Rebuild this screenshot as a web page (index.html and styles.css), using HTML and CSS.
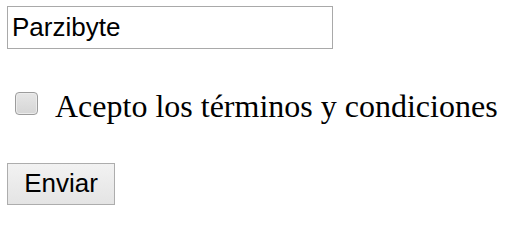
FILE: index.html
```html
<!DOCTYPE html>
<html lang="es">
<head>
<meta charset="utf-8">
<title>Formulario</title>
<link rel="stylesheet" href="styles.css">
</head>
<body>
<form class="form">
  <input class="text-input" type="text" value="Parzibyte">
  <label class="check-row">
    <input class="check" type="checkbox">
    <span class="check-label">Acepto los términos y condiciones</span>
  </label>
  <button class="submit" type="button">Enviar</button>
</form>
</body>
</html>
```
FILE: styles.css
```css
html, body {
  margin: 0;
  padding: 0;
  background: #ffffff;
}

.form {
  display: flex;
  flex-direction: column;
  align-items: flex-start;
  gap: 37px;
  padding: 6px 7px;
}

.text-input {
  box-sizing: border-box;
  width: 326px;
  height: 43px;
  margin: 0;
  padding: 0 3px 0 4px;
  border: 1px solid #a9a9a9;
  border-radius: 0;
  font-family: "Liberation Sans", Arial, sans-serif;
  font-size: 26px;
  color: #000000;
  background: #ffffff;
  outline: none;
}

.check-row {
  display: flex;
  align-items: flex-start;
  height: 40px;
}

.check {
  -webkit-appearance: none;
  appearance: none;
  box-sizing: border-box;
  width: 23px;
  height: 23px;
  margin: 6px 17px 0 8px;
  border: 1px solid #9c9c9c;
  border-radius: 4px;
  background: linear-gradient(#e6e6e6, #d6d6d6);
  box-shadow: inset 0 0 0 1px #ececec;
}

.check-label {
  font-family: "Liberation Serif", "Times New Roman", serif;
  font-size: 32px;
  line-height: 40px;
  color: #000000;
}

.submit {
  box-sizing: border-box;
  width: 108px;
  height: 42px;
  margin: 0;
  padding: 0 0 1px;
  border: 1px solid #adadad;
  border-radius: 0;
  background: linear-gradient(#f2f2f2, #e4e4e4);
  font-family: "Liberation Sans", Arial, sans-serif;
  font-size: 26px;
  color: #000000;
}
```
